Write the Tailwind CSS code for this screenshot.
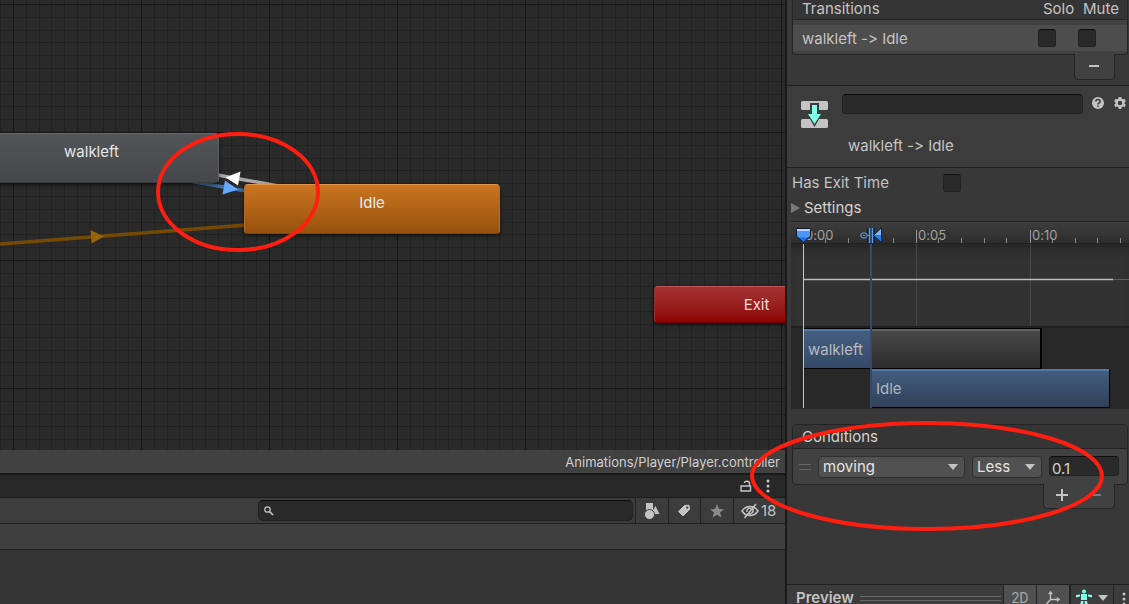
<!DOCTYPE html>
<html lang="en">
<head>
<meta charset="utf-8">
<title>Animator</title>
<script src="https://cdn.jsdelivr.net/npm/@tailwindcss/browser@4"></script>
</head>
<body class="relative h-screen overflow-hidden bg-[#383838] font-['Inter',sans-serif] text-[15px] leading-5 text-[#c4c4c4] [font-feature-settings:'calt'_0]">
<div class="flex h-full">

  <!-- Animator graph and project window -->
  <main class="flex min-w-0 flex-1 flex-col border-r-2 border-[#1a1a1a] bg-[#333333] box-content">
    <section class="relative min-h-0 flex-1 overflow-hidden bg-[#2a2a2a]" aria-label="State machine graph">
      <svg class="absolute inset-0 h-full w-full" aria-hidden="true">
        <defs>
          <pattern id="grid" x="13" y="4" width="128" height="128" patternUnits="userSpaceOnUse">
            <path d="M13.5 0V128M26.5 0V128M38.5 0V128M51.5 0V128M64.5 0V128M77.5 0V128M90.5 0V128M102.5 0V128M115.5 0V128M0 13.5H128M0 26.5H128M0 38.5H128M0 51.5H128M0 64.5H128M0 77.5H128M0 90.5H128M0 102.5H128M0 115.5H128" stroke="#222222" fill="none"/>
            <path d="M.5 0V128M0 .5H128" stroke="#171717" fill="none"/>
          </pattern>
        </defs>
        <rect width="100%" height="100%" fill="url(#grid)"/>
        <path d="M0 244L260 224" stroke="#744a04" stroke-width="3.5"/>
        <path d="M90.500 230L104 236.500L91.500 243.500Z" fill="#986408"/>
        <path d="M184 180L260 193.500" stroke="#416fa5" stroke-width="3.500"/>
        <path d="M225 180.500L238 189.500L222.500 194.500Z" fill="#66a9fb"/>
        <path d="M212 174L284 187" stroke="#a9a9a9" stroke-width="3.500"/>
        <path d="M225.500 177.500L240.500 171.500L238 185.500Z" fill="#ffffff"/>
      </svg>
      <div class="absolute -left-9 top-[133px] flex h-[50px] w-[255px] justify-center rounded border border-t-[#6a6d70] border-x-[#5a5c5f] border-b-[#393b3d] bg-linear-to-b from-[#525558] to-[#45474a] pt-2 text-[#e6e6e6] shadow-[0_2px_4px_#0008]">walkleft</div>
      <div class="absolute left-[244px] top-[184px] flex h-[50px] w-64 justify-center rounded border border-t-[#e0954a] border-x-[#b56d29] border-b-[#81470f] bg-linear-to-b from-[#cb7520] to-[#97520f] pt-2 text-[#ececec] shadow-[0_2px_4px_#0008]">Idle</div>
      <div class="absolute left-[654px] top-[286px] flex h-[37px] w-[205px] justify-center rounded border border-t-[#c05555] border-x-[#9c3232] border-b-[#6d0000] bg-linear-to-b from-[#a33232] to-[#8e0000] pt-2 text-[#f0dede] shadow-[0_2px_4px_#0008]">Exit</div>
    </section>

    <div class="flex h-[23px] items-center justify-end bg-[#414141] pt-px pr-[5px] text-[13px] text-[#cfcfcf]">Animations/Player/Player.controller</div>
    <div class="flex h-[25px] items-center justify-end gap-3 border-t-2 border-b border-t-[#191919] border-b-[#1c1c1c] bg-[#282828] pr-[13px]">
      <button aria-label="Lock" class="block"><svg width="12" height="14" viewBox="0 0 12 14" fill="none" stroke="#c4c4c4" stroke-width="1.400"><path d="M1 7H10.500V12H1ZM9.500 7V4.500C9.500 1.500 4.500 1.500 4.500 4"/></svg></button>
      <button aria-label="More" class="block"><svg width="8" height="14" viewBox="0 0 8 14" fill="#c4c4c4"><circle cx="4" cy="2" r="1.500"/><circle cx="4" cy="7" r="1.500"/><circle cx="4" cy="12" r="1.500"/></svg></button>
    </div>
    <div class="flex h-[26px] items-stretch border-b border-[#222222] bg-[#3c3c3c]">
      <div class="flex-1"></div>
      <label class="my-[2px] mr-[2px] flex w-[375px] items-center rounded-[5px] border border-[#212121] border-t-[#0d0d0d] bg-[#2a2a2a] px-1">
        <svg width="12" height="12" viewBox="0 0 12 12" fill="none" stroke="#c4c4c4"><circle cx="4.500" cy="4.500" r="2.700" stroke-width="1.300"/><path d="M6.500 6.500L10 10" stroke-width="1.700"/></svg>
        <input type="search" aria-label="Search" class="min-w-0 flex-1 bg-transparent outline-none">
      </label>
      <button aria-label="Search by type" class="flex w-[33px] items-center justify-center border-l border-[#232323]"><svg width="16" height="18" viewBox="0 0 16 18" fill="#c4c4c4"><path d="M2 1H9V8H2ZM11.500 4L15.500 12H9.500L8.500 9Z"/><circle cx="5.500" cy="12.500" r="5" stroke="#3c3c3c"/></svg></button>
      <button aria-label="Search by label" class="flex w-[32px] items-center border-l border-[#232323] pl-2"><svg width="14" height="14" viewBox="0 0 14 14"><path d="M7.500 1.500L12 1.200L12.500 5.500L6 12L1.500 7.500Z" fill="#c4c4c4" stroke="#c4c4c4" stroke-linejoin="round"/><circle cx="10.200" cy="3.700" r="1.100" fill="#3c3c3c"/></svg></button>
      <button aria-label="Favourites" class="flex w-[33px] items-center justify-center border-l border-[#232323]"><svg width="16" height="16" viewBox="0 0 16 16" fill="#8a8a8a"><path d="M8 1L10 6L15 6.200L11 9.500L12.500 14.500L8 11.700L3.500 14.500L5 9.500L1 6.200L6 6Z"/></svg></button>
      <button class="flex w-[52px] items-center gap-[2px] border-l border-[#232323] pl-[7px]"><svg width="18" height="16" viewBox="0 0 18 16" fill="none" stroke="#c4c4c4" stroke-width="1.500"><path d="M1 8C5 2 13 2 17 8C13 14 5 14 1 8Z"/><path d="M12 6C13 10 9 12 7 10M6 9C5.500 6 8 4.500 10 5.500M3.500 15L15 1"/></svg>18</button>
    </div>
    <div class="h-[26px] border-b border-[#232323] bg-[#404040]"></div>
    <div class="h-[54px]"></div>
  </main>

  <!-- Inspector -->
  <aside class="flex w-[342px] shrink-0 flex-col overflow-hidden">
    <section class="pr-px pl-[5px]">
      <div class="rounded-b border border-t-0 border-[#242424] bg-[#414141]">
        <div class="flex h-5 items-center border-b border-[#242424] bg-[#353535] pr-[7px] pb-px pl-[9px] leading-[18px]"><span class="flex-1">Transitions</span><span class="w-10">Solo</span><span class="w-[37px]">Mute</span></div>
        <div class="pt-[5px] pb-[3px]">
          <div class="flex h-[26px] items-center bg-[#4d4d4d] pr-[31px] pl-[9px]">
            <span class="flex-1 pt-px">walkleft -&gt; Idle</span>
            <input type="checkbox" aria-label="Solo" class="mr-[22px] size-[18px] appearance-none rounded-[3px] border border-[#212121] border-t-[#0d0d0d] bg-[#2a2a2a]">
            <input type="checkbox" aria-label="Mute" class="size-[18px] appearance-none rounded-[3px] border border-[#212121] border-t-[#0d0d0d] bg-[#2a2a2a]">
          </div>
        </div>
      </div>
      <div class="-mt-px flex justify-end pr-[13px]"><button aria-label="Remove transition" class="flex h-[26px] w-[41px] items-center justify-center rounded-b-[5px] border border-t-0 border-[#242424] bg-[#414141] pr-px pb-px"><span class="h-[2px] w-[10px] bg-[#c4c4c4]"></span></button></div>
    </section>

    <section class="mt-[5px] flex h-[83px] border-y border-[#1f1f1f] bg-[#3c3c3c] pl-[14px]">
      <svg class="mt-[14px] shrink-0" width="28" height="29" viewBox="0 0 28 29"><rect x="0" y="1" width="27" height="9" rx="1.500" fill="#c4c4c4"/><rect x="0" y="19" width="27" height="9" rx="1.500" fill="#c4c4c4"/><path d="M9 3H18V12H22L13.500 27L5 12H9Z" fill="#3c3c3c"/><path d="M11 5H16V14H20L13.500 24L7 14H11Z" fill="#80ffe8"/></svg>
      <div class="ml-[13px] flex min-w-0 flex-1 flex-col">
        <div class="mt-2 flex items-start">
          <input type="text" aria-label="Name" class="h-5 min-w-0 flex-1 rounded-[4px] border border-[#212121] border-t-[#0d0d0d] bg-[#2a2a2a] px-1">
          <button aria-label="Help" class="mt-[2px] ml-2 block"><svg width="14" height="14" viewBox="0 0 14 14"><circle cx="7" cy="7" r="6" fill="#c4c4c4"/><path d="M4.800 5.500C4.800 2.800 9.200 2.800 9.200 5.300C9.200 7 7 6.800 7 8.500M7 9.600V11" stroke="#3c3c3c" stroke-width="1.600" fill="none"/></svg></button>
          <button aria-label="Settings menu" class="mt-[2px] mr-[2px] ml-2 block"><svg width="14" height="14" viewBox="0 0 14 14" fill="none" stroke="#c4c4c4"><circle cx="7" cy="7" r="3.500" stroke-width="2.400"/><path d="M7 1V3M7 11V13M1.800 4L3.500 5M10.500 9L12.200 10M1.800 10L3.500 9M10.500 5L12.200 4" stroke-width="2.800"/></svg></button>
        </div>
        <div class="mt-[22px] pl-[6px]">walkleft -&gt; Idle</div>
      </div>
    </section>

    <label class="mt-[5px] flex h-5 items-center pl-[5px]"><span class="w-[151px]">Has Exit Time</span><input type="checkbox" class="size-[18px] appearance-none rounded-[3px] border border-[#212121] border-t-[#0d0d0d] bg-[#2a2a2a]"></label>
    <button class="mt-[5px] flex h-5 items-center gap-1 pl-1 text-[#d2d2d2]"><svg width="9" height="12" viewBox="0 0 9 12" fill="#797979"><path d="M0 1L9 6L0 11Z"/></svg>Settings</button>

    <!-- Transition timeline -->
    <section class="relative mt-[3px] ml-1 h-[188px] overflow-hidden border-y border-[#262626] bg-[#282828]" aria-label="Transition timeline">
      <div class="flex h-[22px] border-b border-[#222222] bg-linear-to-b from-[#3e3e3e] to-[#2d2d2d] pt-[3px] pl-[14px] text-[13px] text-[#a0a0a0]"><span class="w-[113px]">0:00</span><span class="w-[114px]">0:05</span><span>0:10</span></div>
      <div class="h-[84px] border-b-2 border-[#202020] bg-[#323232] shadow-[inset_0_10px_10px_-6px_#242424]"></div>
      <div class="ml-3 flex h-[41px] w-[239px] items-center border-t border-r-2 border-b border-black bg-linear-to-b from-[#4a4a4a] to-[#2c2c2c] text-[#b8bbbf]"><span class="flex h-full w-[68px] items-center border-t-2 border-[#5377a5] bg-linear-to-b from-[#455e80] to-[#344967] pl-[5px]">walkleft</span><span class="h-full flex-1 border-t-2 border-[#626262]"></span></div>
      <div class="ml-[80px] flex h-[39px] w-[239px] items-center border border-t-0 border-black bg-linear-to-b from-[#455e80] to-[#2e4158] text-[#b0b5bc]"><span class="flex h-full w-full items-center border-t-2 border-[#5377a5] pl-1">Idle</span></div>
      <svg class="absolute inset-0 h-full w-full" aria-hidden="true" fill="none">
        <path d="M34.500 16V21M57.500 16V21M102.500 16V21M147.500 16V21M170.500 16V21M193.500 16V21M215.500 16V21M261.500 16V21M284.500 16V21M306.500 16V21M329.500 16V21" stroke="#8a8a8a"/>
        <path d="M125.500 8V21M239.500 8V21" stroke="#999999"/>
        <path d="M125.500 22V104M239.500 22V104" stroke="#484848"/>
        <path d="M12 57.500H322" stroke="#bdbdbd" stroke-width="1.500"/><path d="M322 57.500H338" stroke="#606060"/>
        <path d="M80 22V187" stroke="#304a70" stroke-width="2"/>
        <path d="M12.500 22V187" stroke="#c8c8c8"/>
        <path d="M5.500 6.500H19.500V14L12.500 20.500L5.500 14Z" fill="#1672e4" stroke="#101a28"/><path d="M6 7H19V9H6Z" fill="#b4d6ff"/><path d="M6 9H19V14L17 15.500H8L6 14Z" fill="#4d97f2"/>
        <path d="M77.500 6V21M82.500 6V21" stroke="#14202e" stroke-width="3"/><path d="M78.500 6V21M81.500 6V21" stroke="#579ce9" stroke-width="1.500"/>
        <path d="M69.500 13.500C71 10 75 10 76.500 13.500C75 17 71 17 69.500 13.500ZM72 13.500H74M76 13.500H78" stroke="#4e91d9" stroke-width="1.200"/>
        <path d="M82.500 13.500L90.500 5.500V20.500Z" fill="#1f80ee" stroke="#10233d"/><path d="M84 12.500L90 7V13H84Z" fill="#7db8fa"/>
      </svg>
    </section>

    <section class="mt-[15px] pr-px pl-[5px]">
      <div class="rounded-[4px] border border-[#242424] bg-[#414141]">
        <h2 class="h-6 rounded-t-[4px] border-b border-[#242424] bg-[#353535] pt-[2px] pl-[9px] text-[#d2d2d2]">Conditions</h2>
        <div class="flex h-[35px] items-start pt-[7px] pr-2 pl-[6px]">
          <span class="mt-2 mr-[7px] h-[6px] w-3 border-y border-[#666666]"></span>
          <div class="relative min-w-0 flex-1"><select aria-label="Parameter" class="h-[22px] w-full appearance-none rounded-[4px] border border-[#303030] bg-[#515151] pl-1 leading-5 text-[#e4e4e4]"><option>moving</option></select><svg class="pointer-events-none absolute top-2 right-[7px]" width="10" height="6" fill="#c4c4c4"><path d="M0 0H10L5 6Z"/></svg></div>
          <div class="relative ml-[7px] w-[70px]"><select aria-label="Comparison" class="h-[22px] w-full appearance-none rounded-[4px] border border-[#303030] bg-[#515151] pl-1 leading-5 text-[#e4e4e4]"><option>Less</option></select><svg class="pointer-events-none absolute top-2 right-[7px]" width="10" height="6" fill="#c4c4c4"><path d="M0 0H10L5 6Z"/></svg></div>
          <input type="text" aria-label="Threshold" value="0.1" class="ml-[7px] h-5 w-[70px] rounded-[4px] border border-[#212121] border-t-[#0d0d0d] bg-[#2a2a2a] pt-1 pl-[2px] leading-4 text-[#d2d2d2]">
        </div>
      </div>
      <div class="-mt-px flex justify-end pr-[13px]"><div class="flex h-[25px] w-[72px] items-center justify-around rounded-b-[5px] border border-t-0 border-[#242424] bg-[#414141] pb-[2px]">
        <button aria-label="Add condition" class="block"><svg width="12" height="12" stroke="#c4c4c4" stroke-width="2"><path d="M6 0V12M0 6H12"/></svg></button>
        <button aria-label="Remove condition" class="block"><svg width="12" height="12" stroke="#7a7a7a" stroke-width="2"><path d="M1 6H10"/></svg></button>
      </div></div>
    </section>

    <footer class="mt-auto flex h-5 shrink-0 border-t border-[#1f1f1f] bg-[#3c3c3c]">
      <span class="pt-1 pl-[9px] leading-[18px] font-semibold">Preview</span>
      <span class="mt-[11px] mr-[2px] ml-[6px] h-[5px] flex-1 border-y border-[#686868]"></span>
      <button class="w-[33px] border-l border-[#232323] bg-[#505050] pt-[3px] font-['Roboto'] text-[14px] text-[#a8a8a8]">2D</button>
      <button aria-label="Pivot" class="flex w-[33px] items-start justify-center border-l border-[#232323] bg-[#505050] pt-[5px]"><svg width="16" height="16" viewBox="0 0 16 16" stroke="#c4c4c4" fill="#c4c4c4"><path d="M5.500 3V9.500H13M5.500 9.500L1.500 14" fill="none" stroke-width="1.300"/><path d="M3.500 4L5.500 1L7.500 4ZM12 7.500L15 9.500L12 11.500Z" stroke-width=".5"/></svg></button>
      <button aria-label="Avatar" class="flex w-[44px] items-start border-l-2 border-[#232323] pt-1 pl-1"><svg width="18" height="18" viewBox="0 0 18 18" fill="#80ffe8"><circle cx="9" cy="2.500" r="2"/><path d="M6 5H12V11H6ZM1 6L5 5.500V7.500L1 8.500ZM17 6L13 5.500V7.500L17 8.500ZM6 12H8.500L8 17H5ZM12 12H9.500L10 17H13Z"/></svg><svg class="mt-[6px] ml-[5px]" width="10" height="6" fill="#c4c4c4"><path d="M0 0H10L5 6Z"/></svg></button>
      <button aria-label="Preview menu" class="flex w-[16px] items-start justify-end border-l border-[#232323] pt-[7px] pr-[3px]"><svg width="4" height="14" fill="#c4c4c4"><circle cx="2" cy="2" r="1.500"/><circle cx="2" cy="7" r="1.500"/><circle cx="2" cy="12" r="1.500"/></svg></button>
    </footer>
  </aside>
</div>

<!-- Red annotation rings -->
<svg class="pointer-events-none absolute inset-0 h-full w-full" aria-hidden="true" fill="none" stroke="#ff1e10" stroke-width="4">
  <ellipse cx="238" cy="192" rx="80" ry="58"/>
  <ellipse cx="927" cy="476" rx="175" ry="53"/>
</svg>
</body>
</html>
